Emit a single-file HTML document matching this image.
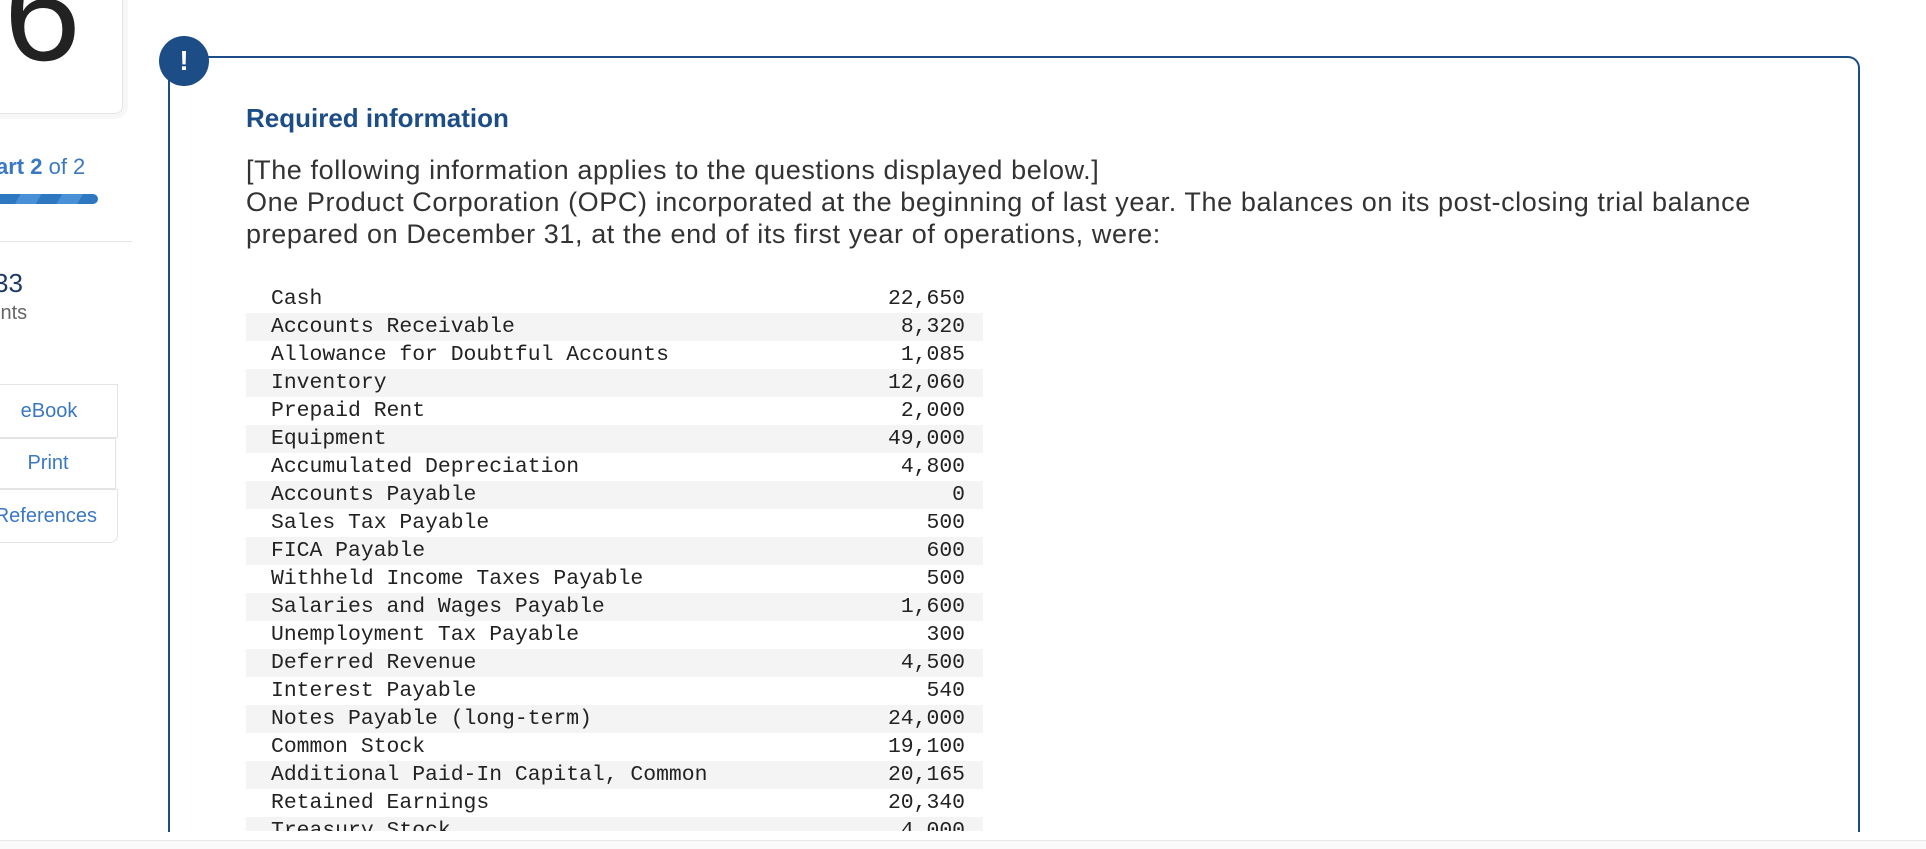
<!DOCTYPE html>
<html><head><meta charset="utf-8"><style>
*{margin:0;padding:0;box-sizing:border-box}
body{width:1926px;height:849px;overflow:hidden;background:#fff;font-family:"Liberation Sans",sans-serif;position:relative}
.abs{position:absolute}
.card{left:-20px;top:-20px;width:143px;height:134px;border:1px solid #e4e4e4;border-radius:8px;box-shadow:0 0 0 5px #f7f7f7}
.six{left:4px;top:-56px;font-size:138px;color:#222;line-height:1}
.part{left:-4px;top:154px;font-size:22px;color:#3a78c3;white-space:nowrap}
.bar{left:-10px;top:194px;width:108px;height:10px;border-radius:5px;background:repeating-linear-gradient(-60deg,#2e78c2 0 18px,#4a90d6 18px 36px)}
.div{left:0;top:241px;width:132px;height:1px;background:#e6e6e6}
.pts{left:-6px;top:268px;font-size:26px;color:#1d3a66}
.pl{left:-4px;top:302px;font-size:20px;color:#666}
.btn{left:-20px;border:1px solid #e4e4e4;color:#3a78c3;font-size:20px;text-align:center;background:#fff}
.panel{left:168px;top:56px;width:1692px;height:776px;border:2px solid #1d4d86;border-radius:0 12px 0 0;border-bottom:none}
.circ{left:159px;top:36px;width:50px;height:50px;border-radius:50%;background:#1d4d86;color:#fff;font-weight:bold;font-size:28px;text-align:center;line-height:50px}
h1{position:absolute;left:246px;top:103px;font-size:26px;color:#1d4d86;font-weight:bold}
.para{left:246px;top:154px;font-size:27px;line-height:32px;color:#333;white-space:nowrap;letter-spacing:0.6px}
.tbl{left:246px;top:285px;width:737px;height:546px;overflow:hidden;font-family:"Liberation Mono",monospace;font-size:21.4px;color:#222}
.r{height:28px;line-height:28px;display:flex;justify-content:space-between;padding:0 18px 0 25px}
.r:nth-child(even){background:#f4f4f4}
.foot{left:0;top:840px;width:1926px;height:9px;background:#fafafa;border-top:1px solid #e8e8e8}
</style></head><body>
<div class="abs card"></div>
<div class="abs six">6</div>
<div class="abs part"><b>art 2</b> of 2</div>
<div class="abs bar"></div>
<div class="abs div"></div>
<div class="abs pts">33</div>
<div class="abs pl">ints</div>
<div class="abs btn" style="top:384px;width:138px;height:54px;line-height:52px">eBook</div>
<div class="abs btn" style="top:438px;width:136px;height:51px;line-height:49px">Print</div>
<div class="abs btn" style="top:489px;width:138px;height:54px;line-height:52px;border-radius:0 0 8px 0;text-align:right;padding-right:20px">References</div>
<div class="abs panel"></div>
<div class="abs circ">!</div>
<h1>Required information</h1>
<div class="abs para">[The following information applies to the questions displayed below.]<br>One Product Corporation (OPC) incorporated at the beginning of last year. The balances on its post-closing trial balance<br>prepared on December 31, at the end of its first year of operations, were:</div>
<div class="abs tbl">
<div class="r"><span>Cash</span><span>22,650</span></div>
<div class="r"><span>Accounts Receivable</span><span>8,320</span></div>
<div class="r"><span>Allowance for Doubtful Accounts</span><span>1,085</span></div>
<div class="r"><span>Inventory</span><span>12,060</span></div>
<div class="r"><span>Prepaid Rent</span><span>2,000</span></div>
<div class="r"><span>Equipment</span><span>49,000</span></div>
<div class="r"><span>Accumulated Depreciation</span><span>4,800</span></div>
<div class="r"><span>Accounts Payable</span><span>0</span></div>
<div class="r"><span>Sales Tax Payable</span><span>500</span></div>
<div class="r"><span>FICA Payable</span><span>600</span></div>
<div class="r"><span>Withheld Income Taxes Payable</span><span>500</span></div>
<div class="r"><span>Salaries and Wages Payable</span><span>1,600</span></div>
<div class="r"><span>Unemployment Tax Payable</span><span>300</span></div>
<div class="r"><span>Deferred Revenue</span><span>4,500</span></div>
<div class="r"><span>Interest Payable</span><span>540</span></div>
<div class="r"><span>Notes Payable (long-term)</span><span>24,000</span></div>
<div class="r"><span>Common Stock</span><span>19,100</span></div>
<div class="r"><span>Additional Paid-In Capital, Common</span><span>20,165</span></div>
<div class="r"><span>Retained Earnings</span><span>20,340</span></div>
<div class="r"><span>Treasury Stock</span><span>4,000</span></div>
</div>
<div class="abs foot"></div>
</body></html>
